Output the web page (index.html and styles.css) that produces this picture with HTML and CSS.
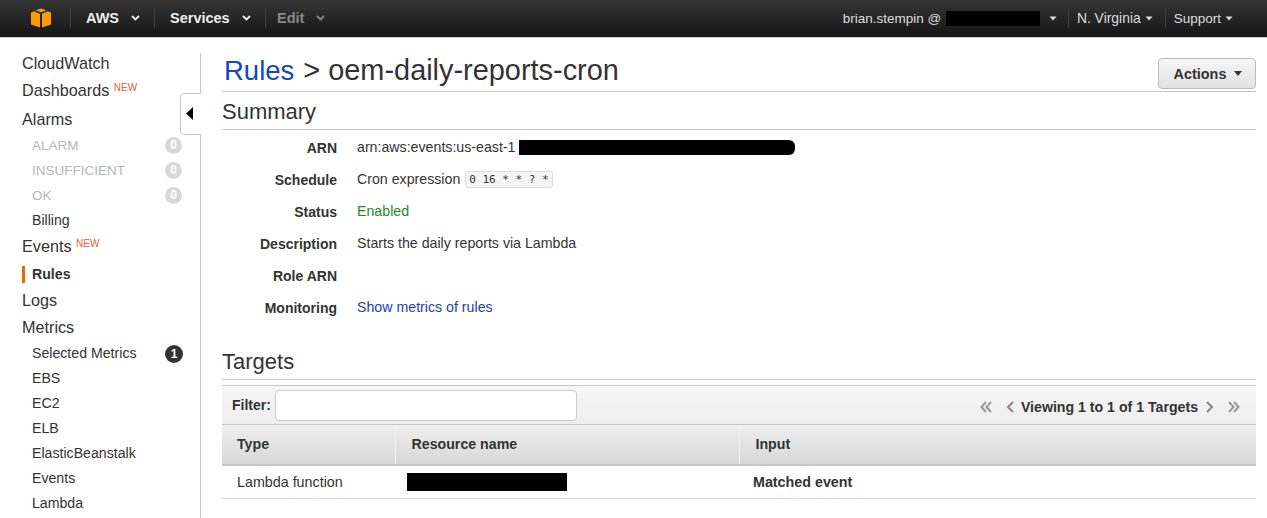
FILE: index.html
```html
<!DOCTYPE html>
<html lang="en">
	<head>
		<meta charset="UTF-8">
		<meta name="viewport" content="width=device-width, initial-scale=1.0">
		<title>Rules &gt; oem-daily-reports-cron</title>
		<link rel="stylesheet" href="styles.css">
	</head>
	<body>

		<div class="topbar">
			<div class="topbar-left">
				<span class="logo-cell">
					<svg class="logo" width="20" height="20" viewBox="0 0 20 22" preserveAspectRatio="none">
						<path fill="#f90" d="M10 0.5 L15.5 2.5 L10 4.8 L4.500 2.500 Z"/>
						<path fill="#f90" d="M0 5 L3 3.700 L9 6.200 L9 21.500 L0 18.200 Z"/>
						<path fill="#f90" d="M20 5 L17 3.700 L11 6.200 L11 21.500 L20 18.200 Z"/>
					</svg>
				</span>
				<span class="nav-item nav-aws">AWS<svg class="chev" width="9" height="6" viewBox="0 0 9 6"><path d="M1 1 L4.500 4.500 L8 1" fill="none" stroke="currentColor" stroke-width="1.800"/></svg></span>
				<span class="nav-item nav-services">Services<svg class="chev" width="9" height="6" viewBox="0 0 9 6"><path d="M1 1 L4.500 4.500 L8 1" fill="none" stroke="currentColor" stroke-width="1.800"/></svg></span>
				<span class="nav-item nav-edit">Edit<svg class="chev" width="9" height="6" viewBox="0 0 9 6"><path d="M1 1 L4.500 4.500 L8 1" fill="none" stroke="currentColor" stroke-width="1.800"/></svg></span>
			</div>
			<div class="topbar-right">
				<span class="nav-user">brian.stempin @ <span class="redact redact-account"></span><svg class="caret" width="8" height="5" viewBox="0 0 8 5"><path d="M0.500 0.500 L4 4.500 L7.500 0.500 Z" fill="currentColor"/></svg></span>
				<span class="nav-small nav-region">N. Virginia<svg class="caret" width="8" height="5" viewBox="0 0 8 5"><path d="M0.500 0.500 L4 4.500 L7.500 0.500 Z" fill="currentColor"/></svg></span>
				<span class="nav-small nav-support">Support<svg class="caret" width="8" height="5" viewBox="0 0 8 5"><path d="M0.500 0.500 L4 4.500 L7.500 0.500 Z" fill="currentColor"/></svg></span>
			</div>
		</div>

		<div class="layout">
			<div class="sidebar">
				<div class="side-top">CloudWatch</div>
				<div class="side-top">Dashboards <sup class="new">NEW</sup></div>
				<div class="side-top side-alarms">Alarms</div>
				<div class="side-sub muted">ALARM<span class="badge">0</span></div>
				<div class="side-sub muted">INSUFFICIENT<span class="badge">0</span></div>
				<div class="side-sub muted">OK<span class="badge">0</span></div>
				<div class="side-sub">Billing</div>
				<div class="side-top">Events <sup class="new">NEW</sup></div>
				<div class="side-sub side-active">Rules</div>
				<div class="side-top">Logs</div>
				<div class="side-top">Metrics</div>
				<div class="side-sub">Selected Metrics<span class="badge badge-dark">1</span></div>
				<div class="side-sub">EBS</div>
				<div class="side-sub">EC2</div>
				<div class="side-sub">ELB</div>
				<div class="side-sub">ElasticBeanstalk</div>
				<div class="side-sub">Events</div>
				<div class="side-sub">Lambda</div>
				<div class="collapse-tab"><svg width="7" height="13" viewBox="0 0 7 13"><path d="M7 0 L0 6.500 L7 13 Z" fill="#000"/></svg></div>
			</div>

			<div class="main">
				<div class="page-head">
					<h1><a href="#">Rules</a> &gt; oem-daily-reports-cron</h1>
					<button class="actions" type="button">Actions<svg width="8" height="5" viewBox="0 0 8 5"><path d="M0 0 L8 0 L4 5 Z" fill="#333"/></svg></button>
				</div>

				<h2 class="section-title">Summary</h2>
				<div class="details">
					<div class="detail-row"><span class="detail-label">ARN</span><span class="detail-value">arn:aws:events:us-east-1<span class="redact redact-arn"></span></span></div>
					<div class="detail-row"><span class="detail-label">Schedule</span><span class="detail-value">Cron expression <code>0 16 * * ? *</code></span></div>
					<div class="detail-row"><span class="detail-label">Status</span><span class="detail-value enabled">Enabled</span></div>
					<div class="detail-row"><span class="detail-label">Description</span><span class="detail-value">Starts the daily reports via Lambda</span></div>
					<div class="detail-row"><span class="detail-label">Role ARN</span><span class="detail-value"></span></div>
					<div class="detail-row"><span class="detail-label">Monitoring</span><span class="detail-value"><a href="#">Show metrics of rules</a></span></div>
				</div>

				<h2 class="section-title targets-title">Targets</h2>
				<div class="toolbar">
					<label class="filter">Filter:<input type="text"></label>
					<div class="pager">
						<svg class="pager-first" width="12" height="12" viewBox="0 0 12 12"><path d="M6 1 L1.500 6 L6 11 M11 1 L6.500 6 L11 11" fill="none" stroke="#999" stroke-width="2"/></svg>
						<svg class="pager-prev" width="8" height="12" viewBox="0 0 8 12"><path d="M7 1 L2 6 L7 11" fill="none" stroke="#888" stroke-width="2"/></svg>
						<span class="pager-text">Viewing 1 to 1 of 1 Targets</span>
						<svg class="pager-next" width="8" height="12" viewBox="0 0 8 12"><path d="M1 1 L6 6 L1 11" fill="none" stroke="#888" stroke-width="2"/></svg>
						<svg class="pager-last" width="12" height="12" viewBox="0 0 12 12"><path d="M1 1 L5.500 6 L1 11 M6 1 L10.500 6 L6 11" fill="none" stroke="#999" stroke-width="2"/></svg>
					</div>
				</div>
				<table class="targets">
					<thead>
						<tr><th class="col-type">Type</th><th class="col-name">Resource name</th><th class="col-input">Input</th></tr>
					</thead>
					<tbody>
						<tr><td>Lambda function</td><td><span class="redact redact-name"></span></td><td class="matched">Matched event</td></tr>
					</tbody>
				</table>
			</div>
		</div>

	</body>
</html>
```

FILE: styles.css
```css
* {
	box-sizing: border-box;
	margin: 0;
	padding: 0;
}
html, body {
	height: 518px;
	overflow: hidden;
}
body {
	background-color: #fff;
	color: #333;
	font-family: 'Liberation Sans', Arial, sans-serif;
	font-size: 14px;
}
a {
	text-decoration: none;
}
.redact {
	display: inline-block;
	background-color: #000;
}

/* top bar */
.topbar {
	display: flex;
	justify-content: space-between;
	height: 38px;
	padding-bottom: 1px;
	background: linear-gradient(#353535, #151515);
	border-bottom: 1px solid #ccc;
	color: #eee;
}
.topbar-left, .topbar-right {
	display: flex;
	align-items: center;
}
.logo-cell {
	display: flex;
	align-items: center;
	width: 71px;
	height: 20px;
	padding-left: 31px;
	border-right: 1px solid #3f3f3f;
}
.logo {
	display: block;
}
.nav-item {
	display: flex;
	align-items: center;
	height: 20px;
	font-size: 14.500px;
	font-weight: bold;
	color: #eee;
}
.nav-aws {
	width: 84px;
	padding-left: 15px;
	border-right: 1px solid #3f3f3f;
}
.nav-services {
	width: 111px;
	padding-left: 15px;
	border-right: 1px solid #3f3f3f;
}
.nav-edit {
	padding-left: 11px;
	color: #888;
}
.chev {
	margin-left: 12px;
}
.nav-user, .nav-small {
	display: flex;
	align-items: center;
	height: 20px;
	font-size: 13.500px;
	color: #ddd;
	white-space: pre;
}
.nav-user {
	padding-right: 11px;
	border-right: 1px solid #3f3f3f;
}
.redact-account {
	width: 94px;
	height: 15px;
	margin-left: 1px;
}
.caret {
	margin-left: 4px;
}
.nav-user .caret {
	margin-left: 9px;
}
.nav-region {
	padding: 0 12px 0 8px;
	border-right: 1px solid #3f3f3f;
	font-size: 13.900px;
}
.nav-support {
	padding: 0 34px 0 8px;
}

/* sidebar */
.layout {
	display: flex;
}
.sidebar {
	position: relative;
	flex: none;
	width: 201px;
	height: 480px;
	padding-top: 12px;
}
.sidebar::after {
	content: "";
	position: absolute;
	top: 15px;
	bottom: 0;
	right: 0;
	width: 1px;
	background-color: #c6c6c6;
}
.side-top {
	height: 27px;
	line-height: 27px;
	padding-left: 22px;
	font-size: 16.200px;
}
.side-alarms {
	margin-top: 2px;
}
.side-sub {
	position: relative;
	height: 25px;
	line-height: 25px;
	padding-left: 32px;
	font-size: 14.150px;
}
.muted {
	color: #b5b5b5;
	font-size: 13.500px;
}
.side-active {
	margin-top: 2px;
	font-weight: bold;
}
.side-active::before {
	content: "";
	position: absolute;
	left: 22px;
	top: 4px;
	width: 3px;
	height: 17px;
	background-color: #e36c09;
}
.new {
	position: relative;
	top: 1px;
	font-size: 10px;
	line-height: 0;
	color: #e2603a;
	vertical-align: super;
}
.badge {
	position: absolute;
	left: 165px;
	top: 4px;
	width: 17px;
	height: 17px;
	border-radius: 50%;
	background-color: #d8d8d8;
	color: #fff;
	font-size: 12px;
	font-weight: bold;
	line-height: 17px;
	text-align: center;
}
.badge-dark {
	width: 18px;
	height: 18px;
	line-height: 18px;
	background-color: #333;
}
.collapse-tab {
	position: absolute;
	z-index: 1;
	left: 180px;
	top: 55px;
	display: flex;
	align-items: center;
	justify-content: center;
	width: 21px;
	height: 42px;
	padding: 0 3px 1px 0;
	background-color: #fff;
	border: 1px solid #c6c6c6;
	border-right: none;
	border-radius: 5px 0 0 5px;
}

/* main column */
.main {
	flex: 1;
	min-width: 0;
	padding: 0 11px 0 21px;
}
.page-head {
	display: flex;
	justify-content: space-between;
	align-items: flex-start;
	height: 54px;
	padding: 15px 0 0 2px;
	border-bottom: 1px solid #c6c6c6;
}
h1 {
	font-size: 28.900px;
	font-weight: normal;
	line-height: 34px;
}
h1 a {
	margin-right: 1px;
	color: #1546b8;
	font-size: 27.500px;
}
.actions {
	display: flex;
	align-items: center;
	justify-content: center;
	width: 98px;
	height: 31px;
	margin-top: 5px;
	padding-left: 2px;
	border: 1px solid #bbb;
	border-radius: 4px;
	background: linear-gradient(#f6f6f6, #e2e2e2);
	color: #333;
	font-family: inherit;
	font-size: 14.400px;
	font-weight: bold;
}
.actions svg {
	margin-left: 8px;
}
.section-title {
	height: 38px;
	padding-top: 7px;
	border-bottom: 1px solid #c6c6c6;
	font-size: 22px;
	font-weight: normal;
	line-height: 26px;
}
.details {
	padding-top: 1px;
}
.detail-row {
	display: flex;
	align-items: center;
	height: 32px;
}
.detail-label {
	width: 115px;
	margin-right: 20px;
	padding-top: 2px;
	font-weight: bold;
	text-align: right;
}
.detail-value {
	display: flex;
	align-items: center;
	font-size: 14.200px;
	white-space: pre;
}
.detail-value a {
	color: #1c3fb0;
}
.enabled {
	color: #1d8a1d;
}
.redact-arn {
	width: 276px;
	height: 15px;
	margin-left: 3px;
	border-radius: 0 6px 6px 0;
}
code {
	display: inline-block;
	height: 17px;
	margin: 1px 0 0 1px;
	padding: 0 3px;
	border: 1px solid #ddd;
	border-radius: 3px;
	background-color: #f5f5f5;
	font-family: 'DejaVu Sans Mono', 'Liberation Mono', monospace;
	font-size: 11px;
	line-height: 15px;
}
.targets-title {
	height: 36px;
	margin-top: 21px;
	padding-top: 5px;
}

/* targets table */
.toolbar {
	display: flex;
	justify-content: space-between;
	align-items: center;
	height: 40px;
	margin-top: 5px;
	padding: 0 16px 0 10px;
	border-top: 1px solid #c6c6c6;
	border-bottom: 1px solid #c6c6c6;
	background: linear-gradient(#f6f6f6, #eee);
}
.filter {
	display: flex;
	align-items: center;
	font-weight: bold;
}
.filter input {
	width: 302px;
	height: 31px;
	margin-left: 4px;
	border: 1px solid #ccc;
	border-radius: 4px;
	background-color: #fff;
}
.pager {
	display: flex;
	align-items: center;
	padding-top: 3px;
	font-size: 14.150px;
	font-weight: bold;
}
.pager-prev {
	margin-left: 14px;
}
.pager-text {
	margin: 0 8px 0 7px;
}
.pager-next {
	margin-right: 14px;
}
.targets {
	width: 100%;
	border-collapse: collapse;
	table-layout: fixed;
}
.targets th {
	height: 40px;
	padding: 0 15px 2px;
	border-bottom: 2px solid #c6c6c6;
	background: linear-gradient(#eee, #d8d8d8);
	font-size: 14.200px;
	text-align: left;
}
.col-type {
	width: 173px;
	border-right: 1px solid #f2f2f2;
}
.targets .col-name {
	width: 344px;
	padding-left: 16px;
	border-right: 1px solid #f2f2f2;
}
.targets .col-input {
	padding-left: 16px;
}
.targets td {
	height: 33px;
	padding: 0 15px;
	border-bottom: 1px solid #ddd;
	font-size: 14.300px;
	vertical-align: middle;
}
.redact-name {
	display: block;
	width: 160px;
	height: 18px;
	margin-left: -3px;
}
.targets .matched {
	padding-left: 14px;
	font-weight: bold;
}
```
